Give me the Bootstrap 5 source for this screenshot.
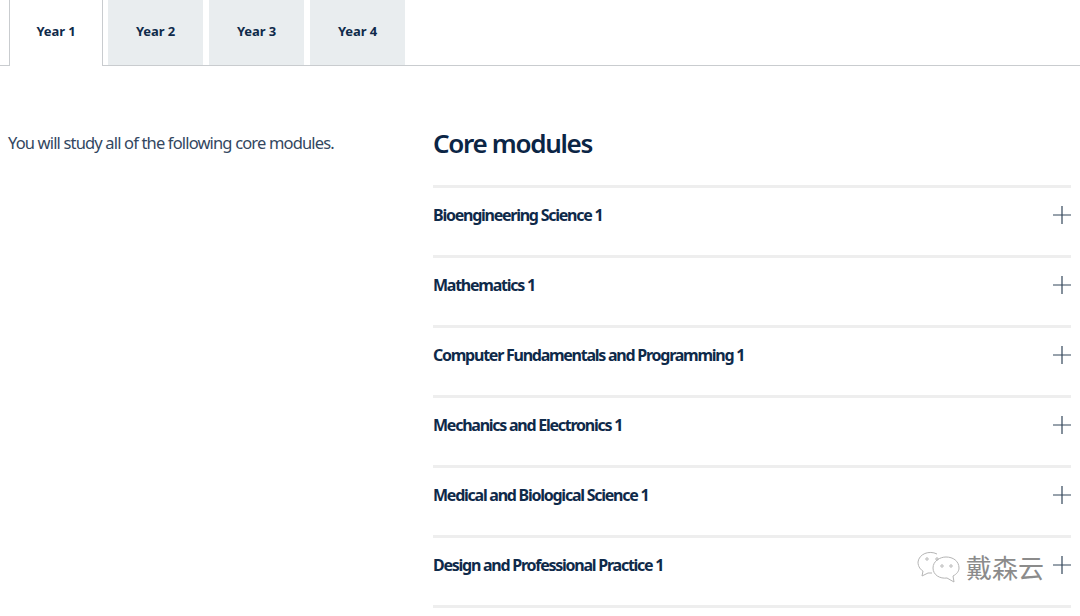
<!DOCTYPE html>
<html lang="en">
<head>
<meta charset="utf-8">
<title>Core modules</title>
<link href="https://cdn.jsdelivr.net/npm/bootstrap@5.3.0/dist/css/bootstrap.min.css" rel="stylesheet">
<style>
html,body{height:616px;overflow:hidden;background:#fff}
body{font-family:"Noto Sans","Open Sans",sans-serif;color:#0b2545;position:relative}
.year-tabs{height:66px;border-bottom:1px solid #c9cccf;padding-left:9px;gap:6px}
.year-tab{width:95px;height:65px;background:#e9edef;color:#0f2a4a;font-size:13px;font-weight:700;letter-spacing:-.1px;padding-bottom:1px}
.year-tab.on{width:94px;margin-right:-1px;height:66px;background:#fff;border:1px solid #c9cccf;border-top:0;border-bottom:0;padding-bottom:3px}
.main-row{padding-left:8px;padding-right:9px;padding-top:62px}
.intro-col{width:425px;flex:none;font-size:16.5px;letter-spacing:-.84px;color:#33475f;line-height:26px}
.intro-col p{padding-top:2px;margin:0}
.mods-col{flex:1;min-width:0}
.mods-title{font-size:26px;font-weight:600;letter-spacing:-1.3px;color:#0b2545;line-height:32px;margin:-1px 0 26px}
.mod-row{height:70px;border-top:3px solid #eeeeee;font-size:16px;font-weight:700;letter-spacing:-1.25px;color:#0f2a4a;padding-bottom:13px}
.mod-row.tail{height:3px;padding:0}
.plus{flex:none;display:block}
.wm{position:absolute;left:917px;top:549px;color:#8b8b8b;font-family:"Noto Sans CJK SC",sans-serif;font-size:26px;line-height:34px;gap:5px;letter-spacing:0}
</style>
</head>
<body>
<nav class="year-tabs d-flex align-items-start">
  <div class="year-tab on d-flex align-items-center justify-content-center">Year 1</div>
  <div class="year-tab d-flex align-items-center justify-content-center">Year 2</div>
  <div class="year-tab d-flex align-items-center justify-content-center">Year 3</div>
  <div class="year-tab d-flex align-items-center justify-content-center">Year 4</div>
</nav>
<div class="main-row d-flex">
  <div class="intro-col"><p>You will study all of the following core modules.</p></div>
  <div class="mods-col">
    <h2 class="mods-title">Core modules</h2>
    <div class="mod-row d-flex align-items-center justify-content-between">Bioengineering Science 1<svg class="plus" width="18" height="18" viewBox="0 0 18 18"><path d="M9 0V18M0 9H18" stroke="#33465a" stroke-width="1.2" fill="none"/></svg></div>
    <div class="mod-row d-flex align-items-center justify-content-between">Mathematics 1<svg class="plus" width="18" height="18" viewBox="0 0 18 18"><path d="M9 0V18M0 9H18" stroke="#33465a" stroke-width="1.2" fill="none"/></svg></div>
    <div class="mod-row d-flex align-items-center justify-content-between">Computer Fundamentals and Programming 1<svg class="plus" width="18" height="18" viewBox="0 0 18 18"><path d="M9 0V18M0 9H18" stroke="#33465a" stroke-width="1.2" fill="none"/></svg></div>
    <div class="mod-row d-flex align-items-center justify-content-between">Mechanics and Electronics 1<svg class="plus" width="18" height="18" viewBox="0 0 18 18"><path d="M9 0V18M0 9H18" stroke="#33465a" stroke-width="1.2" fill="none"/></svg></div>
    <div class="mod-row d-flex align-items-center justify-content-between">Medical and Biological Science 1<svg class="plus" width="18" height="18" viewBox="0 0 18 18"><path d="M9 0V18M0 9H18" stroke="#33465a" stroke-width="1.2" fill="none"/></svg></div>
    <div class="mod-row d-flex align-items-center justify-content-between">Design and Professional Practice 1<svg class="plus" width="18" height="18" viewBox="0 0 18 18"><path d="M9 0V18M0 9H18" stroke="#33465a" stroke-width="1.2" fill="none"/></svg></div>
    <div class="mod-row tail"></div>
  </div>
</div>
<div class="wm d-flex align-items-center">
  <svg width="44" height="36" viewBox="0 0 44 36" fill="none" stroke="#b5b5b5" stroke-width="1"><path d="M20 5C12 1 2 5 1 13C1 18 4 21 6 22L5 27L11 24L15 24"/><path d="M29 8C23 8 16 12 16 19C16 26 23 30 30 29L37 33L36 27C40 25 42 22 42 19C42 12 36 8 29 8Z"/><circle cx="10" cy="10" r="1.2"/><circle cx="20" cy="10" r="1.2"/><circle cx="25" cy="17" r="1.2"/><circle cx="34" cy="17" r="1.2"/></svg>
  <span>戴森云</span>
</div>
<script src="https://cdn.jsdelivr.net/npm/bootstrap@5.3.0/dist/js/bootstrap.bundle.min.js"></script>
</body>
</html>
